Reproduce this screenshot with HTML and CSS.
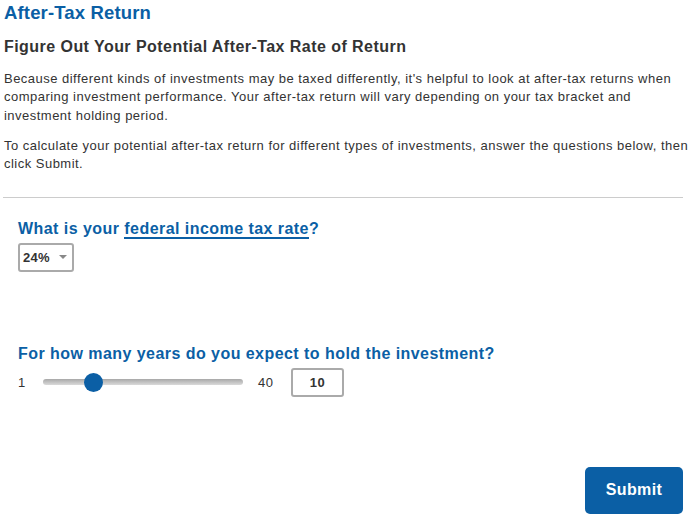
FILE: index.html
```html
<!DOCTYPE html>
<html>
<head>
<meta charset="utf-8">
<link rel="stylesheet" href="styles.css">
</head>
<body>
<div class="page">
  <h1 class="title">After-Tax Return</h1>
  <h2 class="subtitle">Figure Out Your Potential After-Tax Rate of Return</h2>
  <p class="para">Because different kinds of investments may be taxed differently, it's helpful to look at after-tax returns when comparing investment performance. Your after-tax return will vary depending on your tax bracket and investment holding period.</p>
  <p class="para">To calculate your potential after-tax return for different types of investments, answer the questions below, then click Submit.</p>
  <div class="rule"></div>
  <div class="form">
    <div class="question">
      <div class="qlabel">What is your <span class="term">federal income tax rate</span>?</div>
      <div class="select"><span>24%</span><span class="caret"></span></div>
    </div>
    <div class="question q2">
      <div class="qlabel">For how many years do you expect to hold the investment?</div>
      <div class="slider-row">
        <span class="min">1</span>
        <div class="track"><div class="thumb"></div></div>
        <span class="max">40</span>
        <div class="numbox">10</div>
      </div>
    </div>
  </div>
  <div class="actions"><button class="submit">Submit</button></div>
</div>
</body>
</html>
```
FILE: styles.css
```css
html, body { margin: 0; padding: 0; background: #fff; }
body { font-family: "Liberation Sans", Arial, sans-serif; color: #333; }
.page { padding: 3px 9px 0 4px; }
.title { margin: 0; font-size: 18.5px; font-weight: bold; color: #0b5fa5; line-height: 20px; letter-spacing: 0.15px; }
.subtitle { margin: 15px 0 0; font-size: 16px; font-weight: bold; color: #333; line-height: 18px; letter-spacing: 0.45px; }
.para { margin: 13.75px -7px 0 0; font-size: 13px; line-height: 18.5px; color: #333; letter-spacing: 0.48px; }
.para + .para { margin-top: 11.5px; }
.rule { height: 1px; background: #ccc; margin: 23px 0 0 -1px; }
.form { padding-left: 14px; }
.question { margin-top: 22px; }
.qlabel { font-size: 16px; font-weight: bold; color: #0b5fa5; line-height: 18px; letter-spacing: 0.45px; }
.term { border-bottom: 2px solid #0b5fa5; }
.select { margin-top: 5px; height: 25px; border: 2px solid #aaa; border-radius: 3px; display: flex; align-items: center; padding-left: 3px; box-sizing: content-box; width: 49px; font-size: 13px; font-weight: bold; color: #333; gap: 9px; letter-spacing: 0.3px; }
.caret { width: 0; height: 0; border-left: 4px solid transparent; border-right: 4px solid transparent; border-top: 4px solid #888; }
.q2 { margin-top: 73px; }
.slider-row { display: flex; align-items: center; margin-top: 5px; height: 29px; font-size: 13px; color: #333; }
.min { width: 25px; }
.track { position: relative; width: 200px; height: 6px; border-radius: 3px; background: linear-gradient(#a8a8a8, #dadada); }
.thumb { position: absolute; left: 41px; top: -6.5px; width: 19px; height: 19px; border-radius: 50%; background: #0b5fa5; }
.max { margin-left: 15px; width: 33px; letter-spacing: 0.4px; }
.numbox { width: 49px; height: 25px; border: 2px solid #aaa; border-radius: 3px; display: flex; align-items: center; justify-content: center; font-weight: bold; font-size: 13px; color: #333; letter-spacing: 0.4px; }
.actions { display: flex; justify-content: flex-end; margin-top: 70px; }
.submit { width: 98px; height: 47px; border: none; border-radius: 5px; background: #0b5fa5; color: #fff; font-family: "Liberation Sans", Arial, sans-serif; font-size: 16px; font-weight: bold; letter-spacing: 0.4px; }
```
